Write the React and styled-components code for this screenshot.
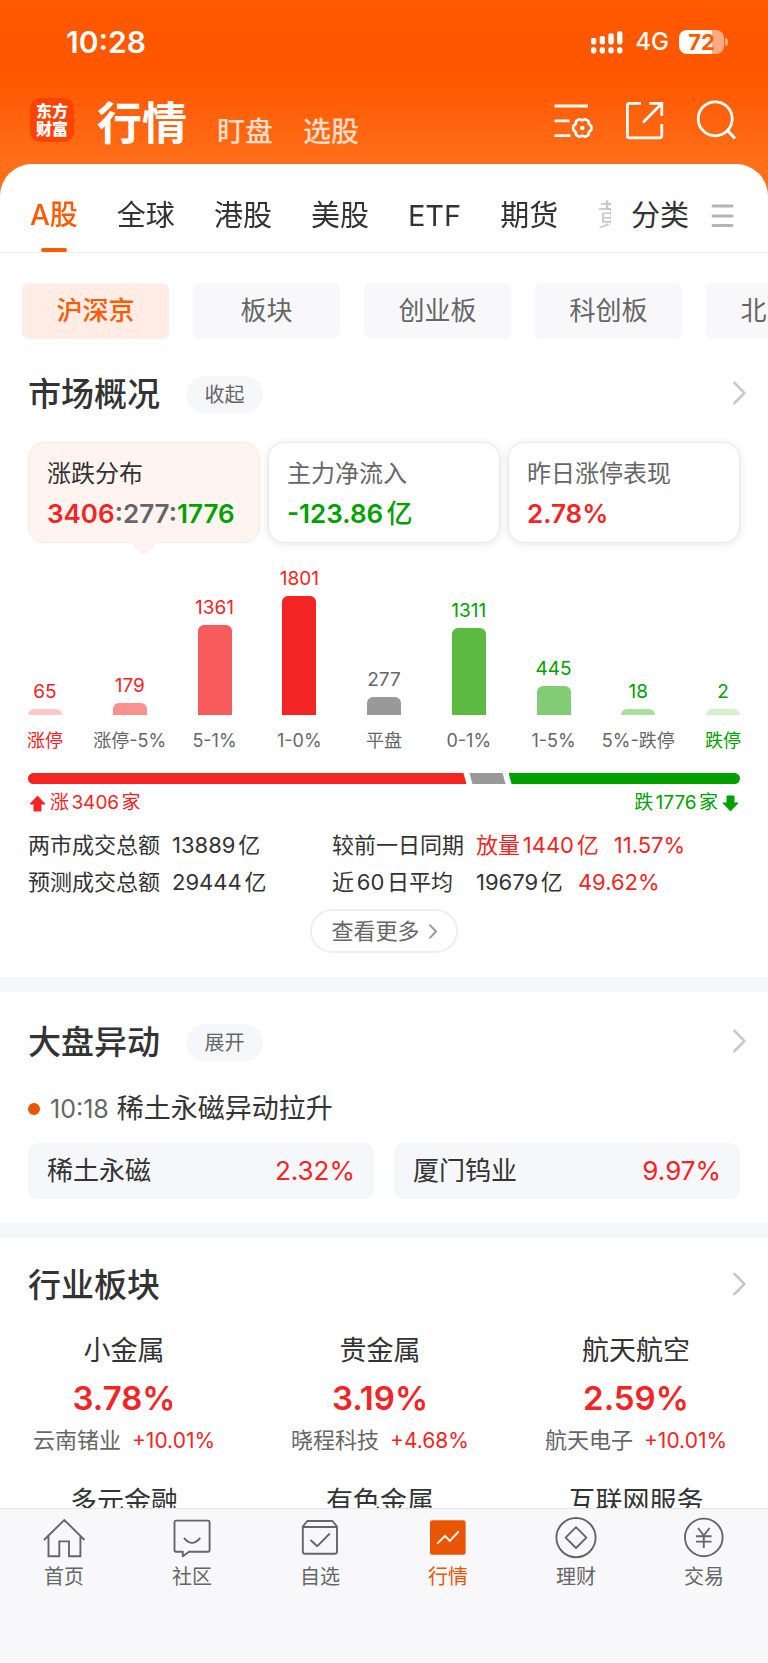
import * as React from "react";
import styled, { createGlobalStyle } from "styled-components";

const orange = "#ff5a00";
const red = "#f42424";
const green = "#00a000";
const ink = "#333";
const grey = "#666";
const pale = "#f6f7fa";

const GlobalStyle = createGlobalStyle`
  * { box-sizing: border-box; }
  body {
    margin: 0;
    background: #fff;
    color: ${ink};
    font-family: Inter, "Noto Sans CJK SC", sans-serif;
    line-height: 1.2;
    text-autospace: normal;
  }
  button {
    margin: 0;
    padding: 0;
    border: none;
    background: none;
    color: inherit;
    font: inherit;
    white-space: nowrap;
    cursor: pointer;
  }
  a { color: inherit; text-decoration: none; }
  h1, h2, h3, p, dl, dd, ul { margin: 0; padding: 0; font-weight: inherit; list-style: none; }
  svg { display: block; }
`;

const Shell = styled.div`
  display: flex;
  flex-direction: column;
  height: 100vh;
`;

/* ---------- top ---------- */

const Header = styled.header`
  flex: none;
  padding-bottom: 48px;
  color: white;
  background: linear-gradient(${orange} 0, #ff5500 72px, #ff6e18 160px);
`;

const StatusBar = styled.div`
  display: flex;
  align-items: center;
  height: 84px;
  padding: 0 40px 0 66px;
`;

const Clock = styled.time`
  flex: 1;
  font-size: 30px;
  font-weight: 600;
`;

const Network = styled.span`
  margin: 0 10px 0 12px;
  font-size: 24px;
  font-weight: 500;
  line-height: 28px;
`;

const Battery = styled.span`
  width: 45px;
  height: 24px;
  border-radius: 8px;
  background: linear-gradient(to right, white ${props => props.$level}%, #ffaa80 ${props => props.$level}%);
  color: ${orange};
  font-size: 22px;
  font-weight: 700;
  line-height: 24px;
  text-align: center;
`;

const BatteryTip = styled.span`
  width: 3px;
  height: 8px;
  margin-left: 1px;
  border-radius: 0 3px 3px 0;
  background: #ffaa80;
`;

const TitleBar = styled.div`
  display: flex;
  align-items: center;
  height: 72px;
  padding: 0 32px 0 30px;
`;

const Logo = styled.span`
  width: 44px;
  padding: 4px 0;
  border-radius: 10px;
  background: #ff4200;
  font-size: 16px;
  font-weight: 900;
  line-height: 18px;
  text-align: center;
`;

const Titles = styled.nav`
  flex: 1;
  display: flex;
  align-items: flex-end;
  gap: 30px;
  margin-left: 23px;
  padding-top: 8px;
`;

const TitleLink = styled.a`
  font-size: ${props => (props.$active ? 45 : 28)}px;
  font-weight: ${props => (props.$active ? 700 : 500)};
  line-height: ${props => (props.$active ? 64 : 48)}px;
  color: ${props => (props.$active ? "white" : "#ffdcc8")};
`;

const Tools = styled.div`
  display: flex;
  gap: 31px;
`;

const Sheet = styled.main`
  flex: 1;
  display: flex;
  flex-direction: column;
  min-height: 0;
  margin-top: -40px;
  border-radius: 32px 32px 0 0;
  background: white;
`;

const MarketBar = styled.div`
  flex: none;
  display: flex;
  align-items: stretch;
  height: 89px;
  padding: 16px 34px 0 30px;
  border-bottom: 1px solid #eee;
`;

const MarketTabs = styled.nav`
  flex: 1;
  display: flex;
  gap: 39px;
  min-width: 0;
  overflow: hidden;
  text-autospace: no-autospace;
  mask-image: linear-gradient(to right, #000 calc(100% - 40px), rgba(0, 0, 0, 0.2) calc(100% - 14px), rgba(0, 0, 0, 0.3));
`;

const MarketTab = styled.button`
  flex: none;
  position: relative;
  font-size: ${props => (props.$active ? 28 : 29)}px;
  font-weight: ${props => (props.$active ? 500 : 400)};
  color: ${props => (props.$active ? orange : ink)};

  &::after {
    content: "";
    display: ${props => (props.$active ? "block" : "none")};
    position: absolute;
    bottom: 0;
    left: calc(50% - 13px);
    width: 26px;
    height: 4px;
    border-radius: 2px;
    background: ${orange};
  }
`;

const Category = styled.button`
  display: flex;
  align-items: center;
  gap: 22px;
  margin-left: 20px;
  font-size: 29px;
`;

const Scroller = styled.div`
  flex: 1;
  min-height: 0;
  overflow-x: hidden;
  overflow-y: auto;
  scrollbar-width: none;
`;

const Chips = styled.div`
  display: flex;
  gap: 24px;
  padding: 30px 22px 5px;
  overflow: hidden;
`;

const Chip = styled.button`
  flex: 0 0 147px;
  height: 56px;
  border-radius: 6px;
  font-size: 26px;
  font-weight: ${props => (props.$active ? 500 : 400)};
  color: ${props => (props.$active ? orange : grey)};
  background: ${props => (props.$active ? "#ffede5" : "#f8f8fb")};
`;

/* ---------- sections ---------- */

const Section = styled.section`
  padding: 23px 28px 24px;

  & + & {
    border-top: 15px solid ${pale};
  }
`;

const SectionHead = styled.div`
  display: flex;
  align-items: center;

  h2 {
    font-size: 33px;
    font-weight: 500;
    line-height: 49px;
  }
  a {
    margin: 0 -6px 4px auto;
  }
`;

const Pill = styled.button`
  width: 77px;
  height: 37px;
  margin: 9px 0 9px 26px;
  border-radius: 19px;
  background: ${pale};
  color: ${grey};
  font-size: 20px;
`;

const Cards = styled.div`
  display: grid;
  grid-template-columns: repeat(3, 1fr);
  gap: 8px;
  margin-top: 20px;
`;

const Card = styled.button`
  position: relative;
  padding: 17px 18px 12px;
  border: 1px solid ${props => (props.$active ? "#ffe6da" : "#e8e8e8")};
  border-radius: 16px;
  background: ${props => (props.$active ? "#fff4f0" : "white")};
  box-shadow: ${props => (props.$active ? "none" : "0 1px 10px rgba(0, 0, 0, 0.1)")};
  color: ${props => (props.$active ? ink : grey)};
  text-align: left;
`;

const CardLabel = styled.span`
  display: block;
  font-size: 24px;
  line-height: 28px;
`;

const CardValue = styled.span`
  display: block;
  margin-top: 10px;
  color: ${grey};
  font-size: 26px;
  font-weight: 600;
  line-height: 32px;
`;

const Unit = styled.span`
  font-weight: 500;
`;

const CardPointer = styled.svg`
  position: absolute;
  top: 100%;
  left: calc(50% - 14px);
`;

const Tint = styled.span`
  color: ${props => props.$color};
`;

const Chart = styled.ul`
  display: flex;
  justify-content: space-between;
  align-items: flex-end;
  margin-top: 25px;
`;

const Column = styled.li`
  display: flex;
  flex-direction: column;
  align-items: center;
  width: 34px;
  font-size: 19px;
  line-height: 22px;
  white-space: nowrap;
  color: ${props => props.$color};
`;

const Bar = styled.span`
  width: 100%;
  margin: 6px 0 15px;
  border-radius: 6px 6px 0 0;
  background: ${props => props.$color};
`;

const ColumnLabel = styled.span`
  color: ${props => (props.$strong ? "inherit" : grey)};
  font-size: 18px;
`;

const Ratio = styled.div`
  display: flex;
  margin-top: 21px;
  border-radius: 6px;
  overflow: hidden;
`;

const RatioPart = styled.span`
  height: 11px;
  background: ${props => props.$color};
  clip-path: polygon(
    0 0,
    calc(100% - ${props => (props.$last ? 0 : 6)}px) 0,
    calc(100% - ${props => (props.$last ? 0 : 3)}px) 100%,
    ${props => (props.$first ? 0 : 3)}px 100%
  );
`;

const Totals = styled.div`
  display: flex;
  justify-content: space-between;
  margin-top: 7px;
  padding: 0 1px;
`;

const Total = styled.span`
  display: flex;
  align-items: center;
  gap: 4px;
  color: ${props => props.$color};
  font-size: 19px;
  line-height: 24px;
`;

const Stats = styled.dl`
  display: grid;
  grid-template-columns: 144px 160px 144px 1fr;
  margin-top: 12px;
  font-size: 22px;
  line-height: 37px;
  white-space: nowrap;
`;

const StatValue = styled.dd`
  display: flex;
  gap: 15px;
`;

const MoreButton = styled.button`
  display: flex;
  justify-content: center;
  align-items: center;
  gap: 9px;
  width: 148px;
  height: 44px;
  margin: 8px auto 0;
  border: 2px solid #eee;
  border-radius: 22px;
  color: ${grey};
  font-size: 22px;
`;

const News = styled.p`
  display: flex;
  align-items: center;
  margin-top: 21px;
  font-size: 27px;
  line-height: 36px;

  &::before {
    content: "";
    width: 12px;
    height: 12px;
    border-radius: 50%;
    background: #ea5504;
  }
  time {
    margin: 0 8px 0 10px;
    color: ${grey};
    font-size: 25px;
  }
`;

const Movers = styled.div`
  display: grid;
  grid-template-columns: 1fr 1fr;
  gap: 20px;
  margin-top: 16px;
`;

const Mover = styled.a`
  display: flex;
  justify-content: space-between;
  padding: 0 19px;
  border-radius: 9px;
  background: ${pale};
  font-size: 26px;
  line-height: 56px;
`;

const Industries = styled.div`
  display: grid;
  grid-template-columns: repeat(3, 1fr);
  row-gap: 29px;
  margin: 23px -28px 0;
`;

const Industry = styled.a`
  padding-right: 8px;
  text-align: center;
  white-space: nowrap;

  h3 {
    font-size: 27px;
    line-height: 36px;
  }
  strong {
    display: block;
    margin: 7px 0 6px;
    color: ${red};
    font-size: 33px;
    font-weight: 600;
    line-height: 44px;
  }
  p {
    display: flex;
    justify-content: center;
    align-items: baseline;
    gap: 11px;
    color: ${grey};
    font-size: 22px;
    line-height: 28px;
  }
  p span {
    color: ${red};
    font-size: 21px;
  }
`;

/* ---------- bottom ---------- */

const TabBar = styled.nav`
  flex: none;
  display: grid;
  grid-template-columns: repeat(6, 1fr);
  padding: 6px 0 73px;
  border-top: 1px solid #e6e6ea;
  background: #f8f8fb;
`;

const TabLink = styled.a`
  display: flex;
  flex-direction: column;
  align-items: center;
  gap: 5px;
  color: ${props => (props.$active ? "#ea5504" : grey)};
  font-size: 20px;
  line-height: 26px;
`;

/* ---------- icons ---------- */

const Icon = ({ size = 40, width = 2.4, children }) => (
    <svg width={size} height={size} viewBox={`0 0 ${size} ${size}`} fill="none"
        stroke="currentColor" strokeWidth={width} strokeLinejoin="round" aria-hidden="true">
        {children}
    </svg>
);

// six soft lobes around a centre
const gearPath = (cx, cy) => {
    const points = [];
    for (let a = 0; a < 360; a += 6) {
        const t = (a * Math.PI) / 180;
        const r = 8.7 + 0.7 * Math.cos(6 * t) - 0.25 * Math.cos(12 * t);
        points.push(`${(cx + r * Math.cos(t)).toFixed(2)} ${(cy + r * Math.sin(t)).toFixed(2)}`);
    }
    return `M${points.join("L")}Z`;
};

const ListGearIcon = () => (
    <Icon>
        <path d="M0.5 6H34M0.5 20.8H15.5M0.5 35.6H16.5" strokeWidth="2.8" />
        <path d={gearPath(28.3, 28)} strokeWidth="2.7" />
        <circle cx="28.3" cy="28" r="2.3" fill="currentColor" stroke="none" />
    </Icon>
);

const ShareIcon = () => (
    <Icon width={2.8}>
        <path d="M16 3.4H4.5Q2.4 3.4 2.4 5.5V35.7Q2.4 37.8 4.5 37.8H34.5Q36.8 37.8 36.8 35.5V24" />
        <path d="M24.5 3.4H36.8V16M36.3 4L18 22.5" strokeLinejoin="miter" />
    </Icon>
);

const SearchIcon = () => (
    <Icon width={2.8}>
        <circle cx="19.2" cy="18.8" r="17" />
        <path d="M31 30L39 38.4" strokeWidth="3.2" />
    </Icon>
);

const SignalIcon = () => (
    <svg width="32" height="24" viewBox="0 0 32 24" fill="currentColor" aria-hidden="true">
        {[8, 6, 3.3, 1.2].map((top, i) => (
            <g key={top}>
                <rect x={i * 8.7} y={top} width="5.3" height={14.4 - top} rx="1.8" />
                <rect x={i * 8.7} y="17.2" width="5.3" height="6.2" rx="1.8" />
            </g>
        ))}
    </svg>
);

const MenuIcon = () => (
    <svg width="23" height="24" viewBox="0 0 23 24" stroke="#b4b4b4" strokeWidth="3" strokeLinecap="round" aria-hidden="true">
        <path d="M2 2H21M2 12H21M2 21.5H21" />
    </svg>
);

const Chevron = ({ width = 13, height = 24, color = "#c8c8c8", stroke = 2.6 }) => (
    <svg width={width} height={height} viewBox="0 0 13 24" fill="none" stroke={color} strokeWidth={stroke} strokeLinecap="round" aria-hidden="true">
        <path d="M1.5 1.8L11.5 12L1.5 22.2" />
    </svg>
);

const UpArrow = () => (
    <svg width="17" height="17" viewBox="0 0 17 17" fill="currentColor" stroke="currentColor" strokeLinejoin="round" aria-hidden="true">
        <path d="M8.5 1L16 9H12V16H5V9H1Z" />
    </svg>
);

const DownArrow = () => (
    <svg width="17" height="17" viewBox="0 0 17 17" fill="currentColor" stroke="currentColor" strokeLinejoin="round" aria-hidden="true">
        <path d="M8.5 16L16 8H12V1H5V8H1Z" />
    </svg>
);

const HomeIcon = () => (
    <Icon size={44} width={1.9}>
        <path d="M2 25L22.3 5L42.5 25M6.5 21V41.2H17.3V26.4H27V41.2H38.4V21" strokeLinejoin="miter" />
    </Icon>
);

const ChatIcon = () => (
    <Icon size={44} width={1.9}>
        <path d="M6 5.6H38Q39.6 5.6 39.6 7.2V35Q39.6 36.7 38 36.7H19L12.8 41.2V36.7H6Q4.5 36.7 4.5 35V7.2Q4.5 5.6 6 5.6Z" />
        <path d="M14 22.8Q22 33 30.2 22.8" />
    </Icon>
);

const WatchIcon = () => (
    <Icon size={44} width={1.9}>
        <path d="M4.8 11.5V36.5Q4.8 38.7 7 38.7H36.8Q39 38.7 39 36.5V11.5L34.5 6H9.3Z" />
        <path d="M4.8 12H39M12.5 25L19.3 31.2L31.8 18.5" />
    </Icon>
);

const MarketIcon = () => (
    <Icon size={44} width={1.9}>
        <rect x="4" y="5.2" width="35.6" height="34.6" rx="2.5" fill="currentColor" stroke="none" />
        <path d="M11.3 28.6L19 20.8L23.8 25.8L32.7 16.5" stroke="white" strokeLinejoin="miter" />
    </Icon>
);

const FinanceIcon = () => (
    <Icon size={44} width={1.9}>
        <circle cx="22" cy="22.6" r="19.6" />
        <path d="M22 12.2L32.4 22.6L22 33L11.6 22.6Z" />
    </Icon>
);

const TradeIcon = () => (
    <Icon size={44} width={1.9}>
        <circle cx="21.8" cy="22.4" r="18.8" />
        <path d="M16 13L21.8 20.5L27.6 13M21.8 20V33M14 21.2H29.6M14 26.6H29.6" />
    </Icon>
);

/* ---------- data ---------- */

const markets = ["A股", "全球", "港股", "美股", "ETF", "期货", "黄金"];
const boards = ["沪深京", "板块", "创业板", "科创板", "北交所"];

const columns = [
    { label: "涨停", count: 65, text: red, bar: "#fcc8c8", strong: true },
    { label: "涨停-5%", count: 179, text: red, bar: "#f99191" },
    { label: "5-1%", count: 1361, text: red, bar: "#f75b5b" },
    { label: "1-0%", count: 1801, text: red, bar: red },
    { label: "平盘", count: 277, text: grey, bar: "#999" },
    { label: "0-1%", count: 1311, text: green, bar: "#5cb942" },
    { label: "1-5%", count: 445, text: green, bar: "#84cc73" },
    { label: "5%-跌停", count: 18, text: green, bar: "#addea1" },
    { label: "跌停", count: 2, text: green, bar: "#d6efd0", strong: true },
];
const tallest = Math.max(...columns.map(c => c.count));

const industries = [
    { name: "小金属", change: "3.78%", leader: "云南锗业", gain: "+10.01%" },
    { name: "贵金属", change: "3.19%", leader: "晓程科技", gain: "+4.68%" },
    { name: "航天航空", change: "2.59%", leader: "航天电子", gain: "+10.01%" },
    { name: "多元金融" },
    { name: "有色金属" },
    { name: "互联网服务" },
];

const tabs = [
    { label: "首页", icon: HomeIcon },
    { label: "社区", icon: ChatIcon },
    { label: "自选", icon: WatchIcon },
    { label: "行情", icon: MarketIcon },
    { label: "理财", icon: FinanceIcon },
    { label: "交易", icon: TradeIcon },
];

const App = () => {
    const [market, setMarket] = React.useState("A股");
    const [board, setBoard] = React.useState("沪深京");
    const [card, setCard] = React.useState(0);

    const cards = [
        {
            label: "涨跌分布",
            value: <><Tint $color={red}>3406</Tint>:277:<Tint $color={green}>1776</Tint></>,
        },
        { label: "主力净流入", value: <Tint $color={green}>-123.86<Unit>亿</Unit></Tint> },
        { label: "昨日涨停表现", value: <Tint $color={red}>2.78%</Tint> },
    ];

    return (
        <Shell>
            <GlobalStyle />
            <Header>
                <StatusBar>
                    <Clock>10:28</Clock>
                    <SignalIcon />
                    <Network>4G</Network>
                    <Battery $level={73}>72</Battery>
                    <BatteryTip />
                </StatusBar>
                <TitleBar>
                    <Logo>东方<br />财富</Logo>
                    <Titles>
                        <TitleLink href="#quotes" $active>行情</TitleLink>
                        <TitleLink href="#watch">盯盘</TitleLink>
                        <TitleLink href="#pick">选股</TitleLink>
                    </Titles>
                    <Tools>
                        <button aria-label="设置"><ListGearIcon /></button>
                        <button aria-label="分享"><ShareIcon /></button>
                        <button aria-label="搜索"><SearchIcon /></button>
                    </Tools>
                </TitleBar>
            </Header>

            <Sheet>
                <MarketBar>
                    <MarketTabs>
                        {markets.map(name => (
                            <MarketTab key={name} $active={name === market} onClick={() => setMarket(name)}>{name}</MarketTab>
                        ))}
                    </MarketTabs>
                    <Category>分类<MenuIcon /></Category>
                </MarketBar>

                <Scroller>
                    <Chips>
                        {boards.map(name => (
                            <Chip key={name} $active={name === board} onClick={() => setBoard(name)}>{name}</Chip>
                        ))}
                    </Chips>

                    <Section>
                        <SectionHead>
                            <h2>市场概况</h2>
                            <Pill>收起</Pill>
                            <a href="#overview" aria-label="市场概况"><Chevron /></a>
                        </SectionHead>
                        <Cards>
                            {cards.map((item, i) => (
                                <Card key={item.label} $active={i === card} onClick={() => setCard(i)}>
                                    <CardLabel>{item.label}</CardLabel>
                                    <CardValue>{item.value}</CardValue>
                                    {i === card && (
                                        <CardPointer width="28" height="12" viewBox="0 0 28 12" fill="#fff4f0">
                                            <path d="M0 0H28L16 10Q14 12 12 10Z" />
                                            <path d="M1 0.5L12 10Q14 12 16 10L27 0.5" fill="none" stroke="#ffe6da" />
                                        </CardPointer>
                                    )}
                                </Card>
                            ))}
                        </Cards>

                        <Chart>
                            {columns.map(c => (
                                <Column key={c.label} $color={c.text}>
                                    {c.count}
                                    <Bar $color={c.bar} style={{ height: Math.max(6, Math.round((c.count / tallest) * 119)) }} />
                                    <ColumnLabel $strong={c.strong}>{c.label}</ColumnLabel>
                                </Column>
                            ))}
                        </Chart>
                        <Ratio>
                            <RatioPart $color={red} $first style={{ width: "62%" }} />
                            <RatioPart $color="#999" style={{ width: "5.5%" }} />
                            <RatioPart $color={green} $last style={{ width: "32.5%" }} />
                        </Ratio>
                        <Totals>
                            <Total $color={red}><UpArrow />涨3406家</Total>
                            <Total $color={green}>跌1776家<DownArrow /></Total>
                        </Totals>

                        <Stats>
                            <dt>两市成交总额</dt>
                            <StatValue>13889亿</StatValue>
                            <dt>较前一日同期</dt>
                            <StatValue><Tint $color={red}>放量1440亿</Tint><Tint $color={red}>11.57%</Tint></StatValue>
                            <dt>预测成交总额</dt>
                            <StatValue>29444亿</StatValue>
                            <dt>近60日平均</dt>
                            <StatValue>19679亿<Tint $color={red}>49.62%</Tint></StatValue>
                        </Stats>
                        <MoreButton>查看更多<Chevron width={8} height={15} color="#999" stroke={3} /></MoreButton>
                    </Section>

                    <Section>
                        <SectionHead>
                            <h2>大盘异动</h2>
                            <Pill>展开</Pill>
                            <a href="#moves" aria-label="大盘异动"><Chevron /></a>
                        </SectionHead>
                        <News><time>10:18</time>稀土永磁异动拉升</News>
                        <Movers>
                            <Mover href="#rare-earth">稀土永磁<Tint $color={red}>2.32%</Tint></Mover>
                            <Mover href="#tungsten">厦门钨业<Tint $color={red}>9.97%</Tint></Mover>
                        </Movers>
                    </Section>

                    <Section>
                        <SectionHead>
                            <h2>行业板块</h2>
                            <a href="#industries" aria-label="行业板块"><Chevron /></a>
                        </SectionHead>
                        <Industries>
                            {industries.map(item => (
                                <Industry key={item.name} href="#industry">
                                    <h3>{item.name}</h3>
                                    {item.change && <strong>{item.change}</strong>}
                                    {item.leader && <p>{item.leader}<span>{item.gain}</span></p>}
                                </Industry>
                            ))}
                        </Industries>
                    </Section>
                </Scroller>
            </Sheet>

            <TabBar>
                {tabs.map(({ label, icon: TabIcon }) => (
                    <TabLink key={label} href="#tab" $active={label === "行情"}>
                        <TabIcon />
                        {label}
                    </TabLink>
                ))}
            </TabBar>
        </Shell>
    );
};

export default App;
